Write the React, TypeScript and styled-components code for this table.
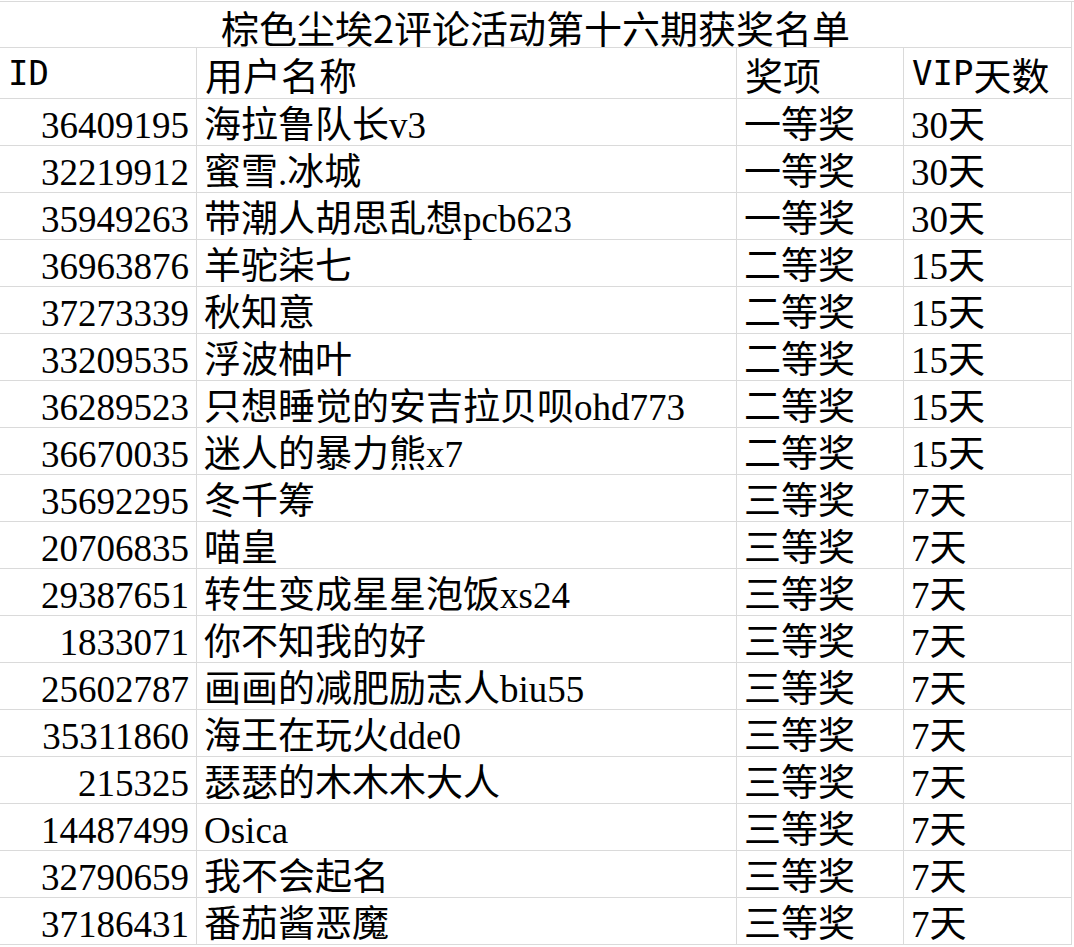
import styled, { createGlobalStyle } from 'styled-components';

const GlobalStyle = createGlobalStyle`
  html, body {
    margin: 0;
    padding: 0;
    background: #fff;
  }
`;

const rows: [string, string, string, string][] = [
  ['36409195', '海拉鲁队长v3', '一等奖', '30天'],
  ['32219912', '蜜雪.冰城', '一等奖', '30天'],
  ['35949263', '带潮人胡思乱想pcb623', '一等奖', '30天'],
  ['36963876', '羊驼柒七', '二等奖', '15天'],
  ['37273339', '秋知意', '二等奖', '15天'],
  ['33209535', '浮波柚叶', '二等奖', '15天'],
  ['36289523', '只想睡觉的安吉拉贝呗ohd773', '二等奖', '15天'],
  ['36670035', '迷人的暴力熊x7', '二等奖', '15天'],
  ['35692295', '冬千筹', '三等奖', '7天'],
  ['20706835', '喵皇', '三等奖', '7天'],
  ['29387651', '转生变成星星泡饭xs24', '三等奖', '7天'],
  ['1833071', '你不知我的好', '三等奖', '7天'],
  ['25602787', '画画的减肥励志人biu55', '三等奖', '7天'],
  ['35311860', '海王在玩火dde0', '三等奖', '7天'],
  ['215325', '瑟瑟的木木木大人', '三等奖', '7天'],
  ['14487499', 'Osica', '三等奖', '7天'],
  ['32790659', '我不会起名', '三等奖', '7天'],
  ['37186431', '番茄酱恶魔', '三等奖', '7天'],
];

const Sheet = styled.div`
  display: grid;
  grid-template-columns: 197px 540px 167px 168px;
  border-top: 1px solid #dadada;
  margin-top: 1px;
  color: #000;
`;

const TitleCell = styled.div`
  grid-column: 1 / -1;
  height: 46px;
  display: flex;
  align-items: center;
  justify-content: center;
  padding-top: 5px;
  box-sizing: border-box;
  border-bottom: 1px solid #dadada;
  border-right: 1px solid #dadada;
  font-family: 'Noto Sans CJK SC', sans-serif;
  font-size: 38px;
  line-height: 38px;
`;

const HeadCell = styled.div`
  height: 51px;
  display: flex;
  align-items: flex-end;
  padding: 0 0 5px 8px;
  box-sizing: border-box;
  border-bottom: 1px solid #dadada;
  border-right: 1px solid #dadada;
  font-family: 'Noto Sans CJK SC', sans-serif;
  font-size: 38px;
  line-height: 1;
`;

const HeadLatin = styled.span`
  font-family: 'DejaVu Sans Mono', monospace;
  font-size: 34px;
  margin-bottom: 3px;
`;

const Cell = styled.div<{ $right?: boolean }>`
  height: 47px;
  display: flex;
  align-items: flex-end;
  justify-content: ${(p) => (p.$right ? 'flex-end' : 'flex-start')};
  padding: ${(p) => (p.$right ? '0 7px 1px 0' : '0 0 1px 7px')};
  box-sizing: border-box;
  border-bottom: 1px solid #dadada;
  border-right: 1px solid #dadada;
  font-family: 'Liberation Serif', 'Noto Sans CJK SC', serif;
  font-size: 37px;
  line-height: 1;
  white-space: nowrap;
`;

export default function App() {
  return (
    <>
      <GlobalStyle />
      <Sheet>
        <TitleCell>棕色尘埃2评论活动第十六期获奖名单</TitleCell>
        <HeadCell>
          <HeadLatin>ID</HeadLatin>
        </HeadCell>
        <HeadCell>用户名称</HeadCell>
        <HeadCell>奖项</HeadCell>
        <HeadCell>
          <HeadLatin>VIP</HeadLatin>天数
        </HeadCell>
        {rows.map(([id, name, prize, days]) => (
          <>
            <Cell key={id + 'a'} $right>
              {id}
            </Cell>
            <Cell key={id + 'b'}>{name}</Cell>
            <Cell key={id + 'c'}>{prize}</Cell>
            <Cell key={id + 'd'}>{days}</Cell>
          </>
        ))}
      </Sheet>
    </>
  );
}
